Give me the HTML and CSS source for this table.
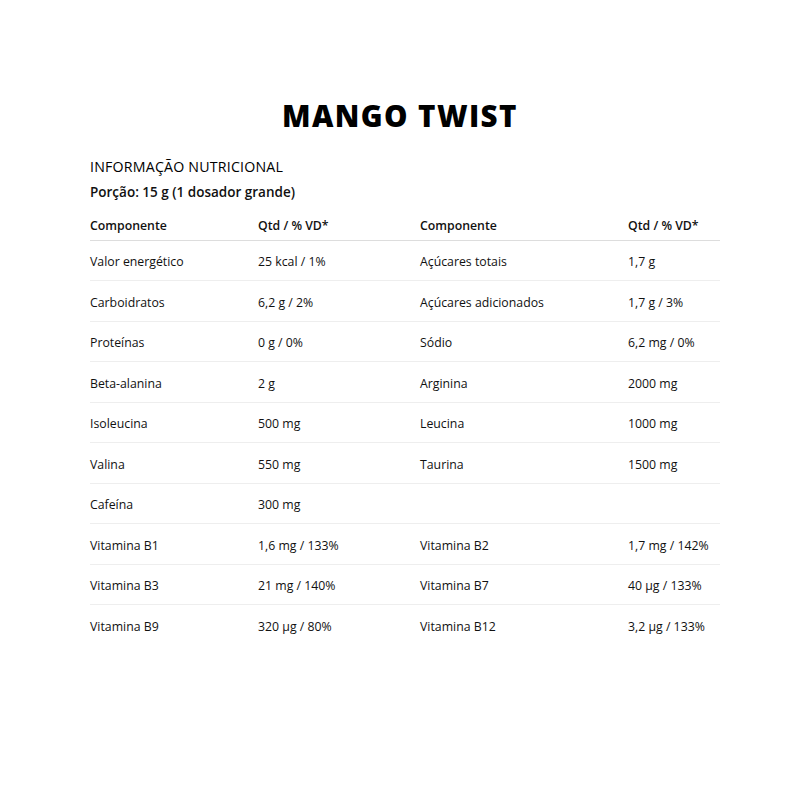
FILE: index.html
```html
<!DOCTYPE html>
<html lang="pt">
<head>
<meta charset="utf-8">
<link rel="stylesheet" href="styles.css">
</head>
<body>
<main class="page">
  <h1 class="title">MANGO TWIST</h1>
  <section class="info">
    <h2 class="info-title">INFORMAÇÃO NUTRICIONAL</h2>
    <p class="portion">Porção: 15 g (1 dosador grande)</p>
    <table class="nutri">
      <colgroup>
        <col class="c1"><col class="c2"><col class="c3"><col class="c4">
      </colgroup>
      <thead>
        <tr><th>Componente</th><th>Qtd / % VD*</th><th>Componente</th><th>Qtd / % VD*</th></tr>
      </thead>
      <tbody>
        <tr><td>Valor energético</td><td>25 kcal / 1%</td><td>Açúcares totais</td><td>1,7 g</td></tr>
        <tr><td>Carboidratos</td><td>6,2 g / 2%</td><td>Açúcares adicionados</td><td>1,7 g / 3%</td></tr>
        <tr><td>Proteínas</td><td>0 g / 0%</td><td>Sódio</td><td>6,2 mg / 0%</td></tr>
        <tr><td>Beta-alanina</td><td>2 g</td><td>Arginina</td><td>2000 mg</td></tr>
        <tr><td>Isoleucina</td><td>500 mg</td><td>Leucina</td><td>1000 mg</td></tr>
        <tr><td>Valina</td><td>550 mg</td><td>Taurina</td><td>1500 mg</td></tr>
        <tr><td>Cafeína</td><td>300 mg</td><td></td><td></td></tr>
        <tr><td>Vitamina B1</td><td>1,6 mg / 133%</td><td>Vitamina B2</td><td>1,7 mg / 142%</td></tr>
        <tr><td>Vitamina B3</td><td>21 mg / 140%</td><td>Vitamina B7</td><td>40 µg / 133%</td></tr>
        <tr><td>Vitamina B9</td><td>320 µg / 80%</td><td>Vitamina B12</td><td>3,2 µg / 133%</td></tr>
      </tbody>
    </table>
  </section>
</main>
</body>
</html>
```
FILE: styles.css
```css
* { box-sizing: border-box; }
html, body { margin: 0; padding: 0; background: #fff; }
body {
  font-family: "Open Sans", "Noto Sans", sans-serif;
  color: #111;
}
.page {
  width: 800px;
  padding: 96px 80px 0 90px;
}
.title {
  margin: 0;
  text-align: center;
  padding-right: 10px;
  font-family: "Open Sans", sans-serif;
  font-weight: 800;
  font-size: 29.5px;
  line-height: 40px;
  letter-spacing: 1.4px;
  color: #000;
}
.info { margin-top: 21px; }
.info-title {
  margin: 0;
  font-size: 14.2px;
  font-weight: 500;
  line-height: 20px;
  letter-spacing: 0.2px;
  color: #000;
}
.portion {
  margin: 5px 0 0 0;
  font-size: 13.5px;
  font-weight: 600;
  line-height: 20px;
}
.nutri {
  margin-top: 8px;
  width: 630px;
  border-collapse: collapse;
  table-layout: fixed;
  font-size: 12.3px;
}
.c1 { width: 168px; }
.c2 { width: 162px; }
.c3 { width: 208px; }
.c4 { width: 92px; }
.nutri th {
  text-align: left;
  font-weight: 600;
  padding: 8px 0 6px 0;
  line-height: 15.5px;
  border-bottom: 1px solid #ddd;
}
.nutri td {
  padding: 13.5px 0 10.5px 0;
  line-height: 15.5px;
  border-bottom: 1px solid #eee;
  white-space: nowrap;
}
.nutri tbody tr:last-child td { border-bottom: none; }
```
